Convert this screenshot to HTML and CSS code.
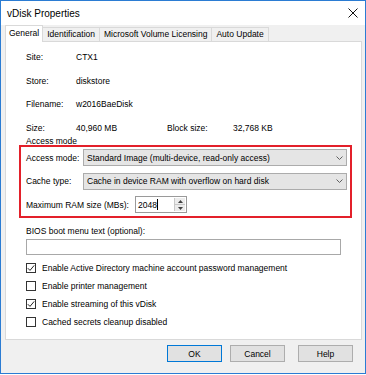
FILE: index.html
```html
<!DOCTYPE html>
<html>
<head>
<meta charset="utf-8">
<link rel="stylesheet" href="styles.css">
</head>
<body>
<div class="window">
  <div class="titlebar">
    <span class="title">vDisk Properties</span>
    <svg class="close" width="10" height="10" viewBox="0 0 10 10"><path d="M0.5 0.5L9.5 9.5M9.5 0.5L0.5 9.5" stroke="#111" stroke-width="1"/></svg>
  </div>
  <div class="client">
    <div class="tabs">
      <div class="tab selected">General</div>
      <div class="tab">Identification</div>
      <div class="tab">Microsoft Volume Licensing</div>
      <div class="tab">Auto Update</div>
    </div>
    <div class="panel">
      <div class="info">
        <span>Site:</span><span class="wide">CTX1</span>
        <span>Store:</span><span class="wide">diskstore</span>
        <span>Filename:</span><span class="wide">w2016BaeDisk</span>
        <span>Size:</span><span>40,960 MB</span><span>Block size:</span><span>32,768 KB</span>
      </div>
      <div class="legend">Access mode</div>
      <div class="group">
        <div class="field">
          <span class="flabel">Access mode:</span>
          <div class="combo"><span>Standard Image (multi-device, read-only access)</span><svg width="7" height="4" viewBox="0 0 7 4"><path d="M0.5 0.5L3.5 3.5L6.5 0.5" fill="none" stroke="#606060" stroke-width="1"/></svg></div>
        </div>
        <div class="field">
          <span class="flabel">Cache type:</span>
          <div class="combo"><span>Cache in device RAM with overflow on hard disk</span><svg width="7" height="4" viewBox="0 0 7 4"><path d="M0.5 0.5L3.5 3.5L6.5 0.5" fill="none" stroke="#606060" stroke-width="1"/></svg></div>
        </div>
        <div class="field">
          <span class="flabel ram">Maximum RAM size (MBs):</span>
          <div class="spin">
            <div class="spin-text"><span>2048</span><span class="caret"></span></div>
            <div class="spin-btns">
              <div class="spin-btn"><svg width="5" height="3" viewBox="0 0 5 3"><path d="M0 3L2.5 0L5 3Z" fill="#404040"/></svg></div>
              <div class="spin-btn"><svg width="5" height="3" viewBox="0 0 5 3"><path d="M0 0L2.5 3L5 0Z" fill="#404040"/></svg></div>
            </div>
          </div>
        </div>
      </div>
      <div class="bios-label">BIOS boot menu text (optional):</div>
      <div class="textbox"></div>
      <div class="checks">
        <div class="check"><span class="box"><svg width="8" height="8" viewBox="0 0 8 8"><path d="M0.8 4.2L3 6.4L7.2 1.4" fill="none" stroke="#222" stroke-width="1"/></svg></span><span>Enable Active Directory machine account password management</span></div>
        <div class="check"><span class="box"></span><span>Enable printer management</span></div>
        <div class="check"><span class="box"><svg width="8" height="8" viewBox="0 0 8 8"><path d="M0.8 4.2L3 6.4L7.2 1.4" fill="none" stroke="#222" stroke-width="1"/></svg></span><span>Enable streaming of this vDisk</span></div>
        <div class="check"><span class="box"></span><span>Cached secrets cleanup disabled</span></div>
      </div>
    </div>
    <div class="buttons">
      <div class="btn default">OK</div>
      <div class="btn">Cancel</div>
      <div class="btn help">Help</div>
    </div>
  </div>
</div>
</body>
</html>
```

FILE: styles.css
```css
* { box-sizing: border-box; }
html, body { margin: 0; padding: 0; background: #fff; }
body {
  font-family: "Liberation Sans", Arial, sans-serif;
  font-size: 8.5px;
  color: #000;
}
.window {
  width: 366px;
  height: 374px;
  border: 1px solid #2b7cd3;
  background: #f0f0f0;
  display: flex;
  flex-direction: column;
}
.titlebar {
  height: 24px;
  flex: none;
  background: #fff;
  display: flex;
  align-items: center;
  justify-content: space-between;
  padding: 0 7px 0 6px;
}
.title { font-size: 10px; color: #000; }
.close { display: block; }
.client { flex: 1; display: flex; flex-direction: column; }
.tabs {
  height: 16px;
  display: flex;
  align-items: flex-end;
  padding-left: 4px;
}
.tab {
  height: 14px;
  line-height: 13px;
  padding: 0 4px;
  border: 1px solid #d9d9d9;
  border-bottom: none;
  background: #f0f0f0;
  margin-left: -1px;
  white-space: nowrap;
}
.tab.selected {
  margin-left: 0;
  padding: 0 3px;
  height: 17px;
  line-height: 15px;
  margin-bottom: -1px;
  background: #fff;
  position: relative;
  z-index: 1;
}
.panel {
  height: 299px;
  margin: 0 3px 0 4px;
  border: 1px solid #d9d9d9;
  background: #fff;
  padding: 9px 20px 0 20px;
  display: flex;
  flex-direction: column;
}
.info {
  display: grid;
  grid-template-columns: 50px 91px 66px 1fr;
  grid-auto-rows: 12px;
  row-gap: 11.5px;
  line-height: 12px;
  white-space: nowrap;
}
.info .wide { grid-column: 2 / 5; }
.legend { line-height: 12px; margin-top: 1.5px; }
.group {
  margin: -2px -11px 0 -7px;
  border: 2px solid #e3202a;
  padding: 2px 3px 3px 5px;
  display: flex;
  flex-direction: column;
  gap: 6.5px;
}
.field { display: flex; align-items: center; height: 17px; }
.flabel { width: 57px; flex: none; white-space: nowrap; }
.flabel.ram { width: 109px; }
.combo {
  width: 264px;
  height: 17px;
  background: #e5e5e5;
  border: 1px solid #acacac;
  display: flex;
  align-items: center;
  justify-content: space-between;
  padding: 0 3px 0 3px;
  white-space: nowrap;
}
.combo svg { display: block; }
.spin {
  width: 52px;
  height: 17px;
  border: 1px solid #9a9a9a;
  display: flex;
  background: #fff;
}
.spin-text {
  flex: 1;
  display: flex;
  align-items: center;
  padding-left: 2px;
}
.caret { width: 1px; height: 11px; background: #000; margin-left: 0.5px; }
.spin-btns {
  width: 11px;
  display: flex;
  flex-direction: column;
  border-left: 1px solid #c8c8c8;
  margin: 1px 1px 1px 0;
}
.spin-btn {
  flex: 1;
  background: #ececec;
  display: flex;
  align-items: center;
  justify-content: center;
}
.spin-btn + .spin-btn { border-top: 1px solid #c8c8c8; }
.spin-btn svg { display: block; }
.bios-label { margin-top: 6.5px; line-height: 12px; }
.textbox {
  height: 16px;
  margin-top: 2.5px;
  border: 1px solid #a8a8a8;
  background: #fff;
}
.checks {
  margin-top: 7px;
  display: flex;
  flex-direction: column;
  gap: 6px;
}
.check { display: flex; align-items: center; height: 12px; line-height: 12px; white-space: nowrap; }
.box {
  width: 10px;
  height: 10px;
  border: 1px solid #333;
  margin-right: 6px;
  display: flex;
  align-items: center;
  justify-content: center;
  background: #fff;
}
.box svg { display: block; }
.buttons {
  display: flex;
  justify-content: flex-end;
  padding: 5px 12px 0 0;
  gap: 8px;
}
.btn {
  width: 55px;
  height: 17px;
  background: #e1e1e1;
  border: 1px solid #adadad;
  display: flex;
  align-items: center;
  justify-content: center;
}
.btn.default { border-color: #0078d7; }
.btn.help { margin-left: 5px; }
```
